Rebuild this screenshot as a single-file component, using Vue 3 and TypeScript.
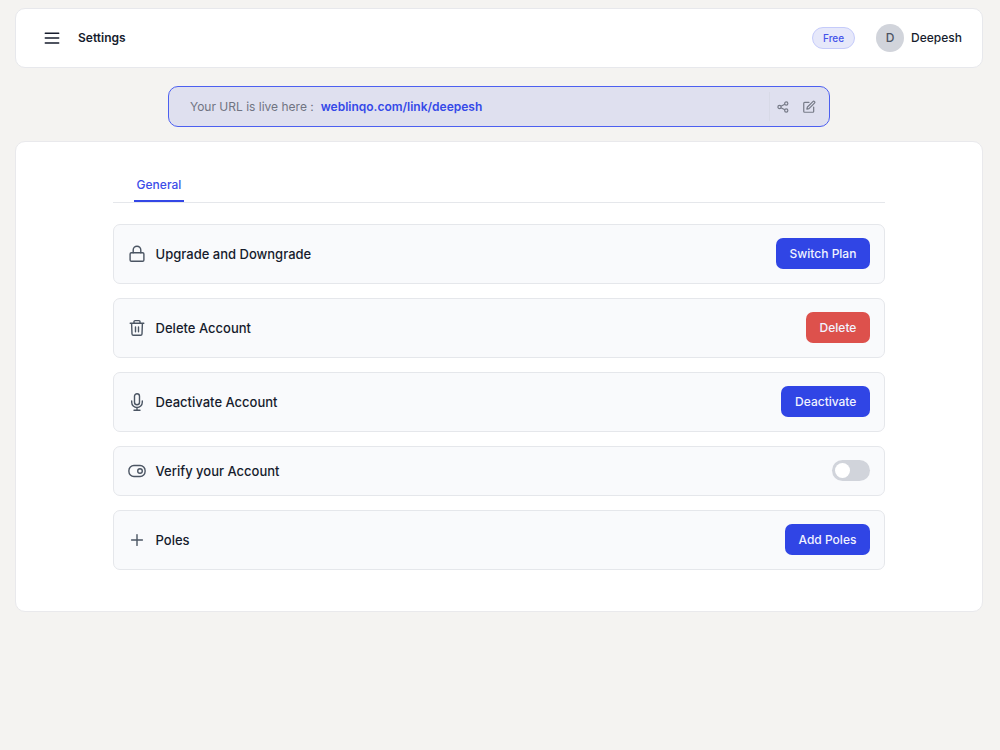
<script setup lang="ts">
import { ref } from 'vue'

type IconName = 'lock' | 'trash' | 'mic' | 'switch' | 'plus'

interface SettingRow {
  icon: IconName
  label: string
  action?: string
  danger?: boolean
}

const rows: SettingRow[] = [
  { icon: 'lock', label: 'Upgrade and Downgrade', action: 'Switch Plan' },
  { icon: 'trash', label: 'Delete Account', action: 'Delete', danger: true },
  { icon: 'mic', label: 'Deactivate Account', action: 'Deactivate' },
  { icon: 'switch', label: 'Verify your Account' },
  { icon: 'plus', label: 'Poles', action: 'Add Poles' },
]

const verified = ref(false)
</script>

<template>
  <div class="page">
    <header class="topbar">
      <button class="icon-button menu" type="button" aria-label="Menu">
        <svg width="16" height="14" viewBox="0 0 16 14" fill="none" stroke="currentColor" stroke-width="1.5" stroke-linecap="round">
          <path d="M1.3 2.3h13.4M1.3 7.1h13.4M1.3 11.9h13.4" />
        </svg>
      </button>
      <h1 class="title">Settings</h1>
      <span class="plan">Free</span>
      <span class="avatar">D</span>
      <span class="user">Deepesh</span>
    </header>

    <section class="url-bar">
      <span class="url-label">Your URL is live here :</span>
      <a class="url-link" href="#">weblinqo.com/link/deepesh</a>
      <div class="url-actions">
        <button class="icon-button" type="button" aria-label="Share">
          <svg width="12" height="12" viewBox="0 0 24 24" fill="none" stroke="currentColor" stroke-width="2.4">
            <circle cx="18.5" cy="5" r="3.2" />
            <circle cx="5" cy="12" r="3.2" />
            <circle cx="18.5" cy="19" r="3.2" />
            <path d="M7.9 10.5l7.7-4M7.9 13.5l7.7 4" />
          </svg>
        </button>
        <button class="icon-button" type="button" aria-label="Edit">
          <svg width="14" height="14" viewBox="0 0 24 24" fill="none" stroke="currentColor" stroke-width="2.1" stroke-linecap="round" stroke-linejoin="round">
            <path d="M12 4H4.500a1.500 1.500 0 0 0-1.500 1.500v14A1.500 1.500 0 0 0 4.500 21h14a1.500 1.500 0 0 0 1.500-1.500V12" />
            <path d="M18.700 2.700a1.900 1.900 0 0 1 2.700 2.700L12 14.700 8.300 15.700l1-3.700z" />
          </svg>
        </button>
      </div>
    </section>

    <main class="panel">
      <div class="content">
        <nav class="tabs">
          <button class="tab" type="button">General</button>
        </nav>
        <ul class="rows">
          <li v-for="row in rows" :key="row.label" class="row">
            <svg class="row-icon" width="18" height="18" viewBox="0 0 18 18" fill="none" stroke="currentColor" stroke-width="1.4" stroke-linecap="round" stroke-linejoin="round" aria-hidden="true">
              <template v-if="row.icon === 'lock'">
                <rect x="2.100" y="7.700" width="13.800" height="8.600" rx="1.300" />
                <path d="M5.200 7.700V5a3.800 3.800 0 0 1 7.600 0v2.700" />
              </template>
              <template v-else-if="row.icon === 'trash'">
                <path d="M2.200 4.300h13.600M3.600 4.300l.4 10.700a1.400 1.400 0 0 0 1.400 1.300h7.200a1.400 1.400 0 0 0 1.400-1.300l.4-10.700M6 4.300V2.600a1 1 0 0 1 1-1h4a1 1 0 0 1 1 1v1.700M7.500 7.900v4.900M10.500 7.900v4.900" />
              </template>
              <template v-else-if="row.icon === 'mic'">
                <rect x="6.500" y="0.700" width="5" height="11" rx="2.500" />
                <path d="M3.700 7.900v1.300a5.300 5.300 0 0 0 10.600 0V7.900M9 14.500v2.700M6 17.200h6" />
              </template>
              <template v-else-if="row.icon === 'switch'">
                <rect x="0.900" y="3.500" width="16.200" height="11" rx="5" />
                <circle cx="12" cy="9" r="2.300" />
              </template>
              <path v-else d="M3.600 9h10.800M9 3.600v10.800" />
            </svg>
            <label v-if="!row.action" class="row-label" for="verify-account">{{ row.label }}</label>
            <span v-else class="row-label">{{ row.label }}</span>
            <button v-if="row.action" class="action" :class="{ danger: row.danger }" type="button">{{ row.action }}</button>
            <input v-else id="verify-account" v-model="verified" class="toggle" type="checkbox" role="switch" />
          </li>
        </ul>
      </div>
    </main>
  </div>
</template>

<style>
body {
  background: #f4f3f1;
}
</style>

<style scoped>
.page {
  display: flex;
  flex-direction: column;
  padding: 8px 17px 24px 15px;
  font-family: Inter, "Liberation Sans", sans-serif;
  font-size: 12px;
  line-height: 20px;
  color: #161c2d;
}

.page * {
  box-sizing: border-box;
}

button {
  font: inherit;
  cursor: pointer;
}

.icon-button {
  display: flex;
  align-items: center;
  justify-content: center;
  padding: 0;
  border: 0;
  background: none;
  color: inherit;
}

.topbar {
  display: flex;
  align-items: center;
  padding: 15px 20px 15px 28px;
  background: #fff;
  border: 1px solid #e7e8ec;
  border-radius: 10px;
}

.title {
  margin: 0 auto 0 18px;
  font-size: 12px;
  font-weight: 600;
}

.plan {
  padding: 0 10px;
  border: 1px solid #c5cbfa;
  border-radius: 11px;
  background: #e6e8fa;
  color: #4453ea;
  font-size: 10px;
  font-weight: 500;
}

.avatar {
  width: 28px;
  margin: 0 7px 0 21px;
  border-radius: 50%;
  background: #d1d4db;
  color: #4b5362;
  font-weight: 500;
  line-height: 28px;
  text-align: center;
}

.user {
  font-weight: 500;
}

.url-bar {
  display: flex;
  align-items: center;
  align-self: center;
  width: 68.4%;
  margin: 18px 0 14px;
  padding: 5px 13px 5px 21px;
  background: #dfe0ef;
  border: 1px solid #4c5ff0;
  border-radius: 10px;
}

.url-label {
  color: #707482;
}

.url-link {
  margin-left: 7px;
  color: #3549e8;
  font-weight: 600;
  text-decoration: none;
}

.url-actions {
  display: flex;
  align-items: center;
  gap: 13px;
  height: 29px;
  margin-left: auto;
  padding-left: 7px;
  border-left: 1px solid #d8dae7;
  color: #777b88;
}

.panel {
  padding: 32px 0 41px;
  background: #fff;
  border: 1px solid #e9e9ec;
  border-radius: 10px;
}

.content {
  width: 80%;
  margin: 0 auto;
}

.tabs {
  display: flex;
  padding-left: 21px;
  border-bottom: 1px solid #e5e7eb;
}

.tab {
  padding: 1px 3px 5px;
  border: 0;
  border-bottom: 2px solid #3347e6;
  background: none;
  color: #3c4de8;
  font-weight: 500;
}

.rows {
  display: flex;
  flex-direction: column;
  gap: 14px;
  margin: 21px 0 0;
  padding: 0;
  list-style: none;
}

.row {
  display: flex;
  align-items: center;
  padding: 13px 14px 14px;
  background: #f9fafc;
  border: 1px solid #e5e7eb;
  border-radius: 7px;
}

.row-icon {
  color: #4b5563;
}

.row-label {
  margin: 0 auto 0 10px;
  font-size: 13px;
  font-weight: 500;
}

.action {
  height: 31px;
  padding: 0 14px;
  border: 0;
  border-radius: 7px;
  background: #3045e5;
  color: #f1f3ff;
  font-weight: 500;
}

.action.danger {
  background: #dd514c;
}

.toggle {
  width: 38px;
  height: 21px;
  margin: 0;
  padding: 3px;
  appearance: none;
  border-radius: 11px;
  background: #d1d4db;
  cursor: pointer;
}

.toggle::before {
  content: "";
  display: block;
  width: 15px;
  height: 15px;
  border-radius: 50%;
  background: #fff;
}

.toggle:checked {
  background: #3045e5;
}

.toggle:checked::before {
  margin-left: auto;
}
</style>
